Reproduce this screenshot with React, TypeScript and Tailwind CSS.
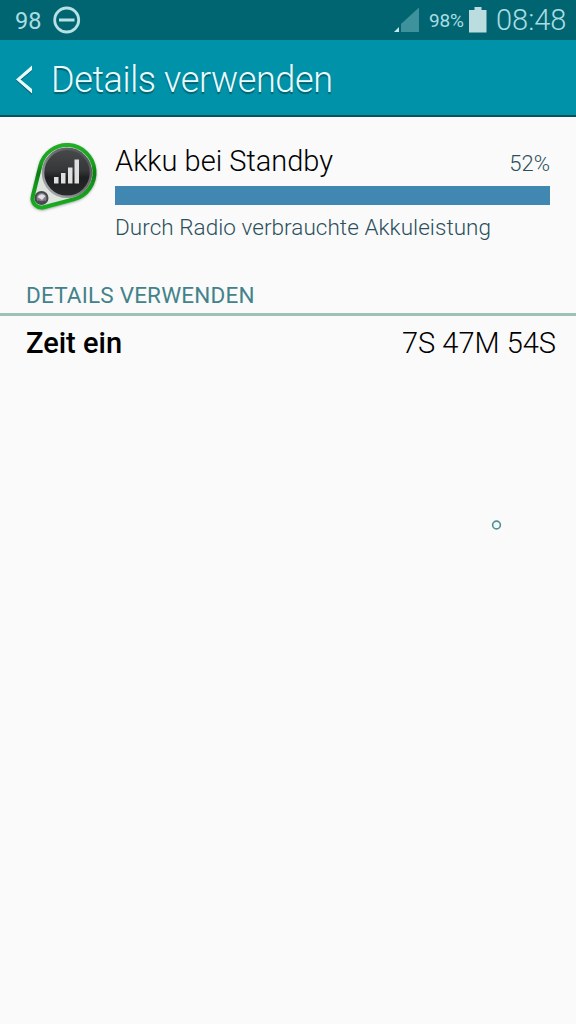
function SignalIcon() {
  return (
    <svg width="27" height="26" viewBox="0 0 27 26" className="shrink-0">
      <path d="M7 25V17L25 0.5V25Z" fill="#3d929b" />
      <path d="M0 25L5 20V25Z" fill="#c4e9ec" />
    </svg>
  );
}

const OUTLINE = "M20.300 30.900A27.500 27.500 0 1 1 54.100 64.100L23.800 72.200A9 9 0 0 1 12.800 61.300Z";

function StandbyIcon() {
  return (
    <svg width="84" height="84" viewBox="0 0 84 84" className="shrink-0">
      <defs>
        <linearGradient id="disc" x1="0" y1="0" x2="0" y2="1">
          <stop offset="0" stopColor="#48494b" />
          <stop offset="0.45" stopColor="#363739" />
          <stop offset="0.6" stopColor="#1e1f21" />
          <stop offset="1" stopColor="#2a2b2d" />
        </linearGradient>
        <linearGradient id="rim" x1="0" y1="1" x2="1" y2="0">
          <stop offset="0" stopColor="#b5b8bb" />
          <stop offset="0.45" stopColor="#77797c" />
          <stop offset="1" stopColor="#484b4d" />
        </linearGradient>
        <linearGradient id="edge" x1="0" y1="0" x2="0" y2="1">
          <stop offset="0" stopColor="#22ae25" />
          <stop offset="0.3" stopColor="#16a01b" />
          <stop offset="0.45" stopColor="#087d10" />
          <stop offset="0.62" stopColor="#12951a" />
          <stop offset="1" stopColor="#18ac20" />
        </linearGradient>
        <filter id="soft" x="-20%" y="-20%" width="140%" height="140%">
          <feGaussianBlur stdDeviation="1.5" />
        </filter>
      </defs>
      <path d={OUTLINE} fill="#4d634d" opacity=".75" stroke="#4d634d" strokeWidth="3" filter="url(#soft)" transform="translate(0 1)" />
      <path d={OUTLINE} fill="#dfe4df" stroke="url(#edge)" strokeWidth="4" />
      <circle cx="47" cy="37.800" r="24" fill="url(#disc)" stroke="url(#rim)" strokeWidth="2.500" />
      <circle cx="21.500" cy="63" r="6" fill="#858188" stroke="#45494a" strokeWidth="2" />
      <path d="M17.500 62Q21 57 25.500 61L22 65Z" fill="#e5dde8" />
      <path d="M18 66Q22 68.500 25 66" fill="none" stroke="#4f4654" strokeWidth="2" />
      <path d="M34 42H38.500V48.500H34Z M41 38H45.500V48.500H41Z M48 32.500H52.500V48.500H48Z M54.500 24.500H59V48.500H54.500Z" fill="#dedede" />
    </svg>
  );
}

export default function App() {
  return (
    <div className="flex h-[1024px] w-[576px] flex-col overflow-hidden bg-[#fafafa] font-['Roboto',sans-serif] whitespace-nowrap">
      <div className="flex h-10 shrink-0 items-center bg-[#016571] pr-[9px] pl-[15px] text-[#a9dde1]">
        <span className="w-[38px] pt-px text-[23.5px] leading-[40px] font-normal">98</span>
        <svg width="28" height="28" viewBox="0 0 28 28" className="shrink-0">
          <circle cx="13.700" cy="14" r="12" fill="none" stroke="#b7e2e5" strokeWidth="2.800" />
          <path d="M6 14H21.500" stroke="#b7e2e5" strokeWidth="3" />
        </svg>
        <div className="ml-auto flex items-center">
          <SignalIcon />
          <span className="ml-[8px] w-[36px] pt-px text-[19px] leading-[40px] tracking-[-0.2px]">98%</span>
          <svg width="18" height="26" viewBox="0 0 18 26" className="ml-[4px] shrink-0">
            <path d="M5.500 0H12.500V3H17.500V25.500H0V3H5.500Z" fill="#bcdde0" />
          </svg>
          <span className="ml-[9px] w-[71px] text-[29px] leading-[40px] font-light">08:48</span>
        </div>
      </div>

      <header className="flex h-[77px] shrink-0 items-center border-b-2 border-[#0b505b] bg-[#0092a8] pt-[5px] pl-[15px] text-[#e9fcff]">
        <svg width="19" height="31" viewBox="0 0 19 31" className="mb-[2px] shrink-0">
          <path d="M17 2V6L5.500 15.500L17 25.500V30L1 15.500Z" transform="translate(0 1)" fill="#075f6d" />
          <path d="M17 1.500V6L5.500 15.500L17 25V29.500L1 15.500Z" fill="#e9fcff" />
        </svg>
        <h1 className="ml-[17px] text-[36px] leading-[44px] font-light tracking-[-0.4px] [text-shadow:0_1.500px_1px_#04606e]">Details verwenden</h1>
      </header>

      <section className="flex h-[153px] shrink-0 pt-[18px] pr-[26px] pl-[20px]">
        <StandbyIcon />
        <div className="ml-[11px] flex flex-1 flex-col pt-[6px]">
          <div className="flex h-[44px] items-start justify-between">
            <span className="pt-[2px] text-[29px] leading-[36px] font-light text-black">Akku bei Standby</span>
            <span className="pt-[9px] text-[22px] leading-[28px] font-light text-[#2b505c]">52%</span>
          </div>
          <div className="mt-px h-[19px] bg-[#4088b1]" />
          <p className="mt-[8px] text-[22.500px] leading-[28px] font-light tracking-[0.05px] text-[#2b505c]">Durch Radio verbrauchte Akkuleistung</p>
        </div>
      </section>

      <h2 className="flex h-[46px] shrink-0 items-center border-b-[3px] border-[#9fc0b6] pt-[6px] pl-[26px] text-[22.500px] leading-[28px] font-normal tracking-[0.18px] text-[#43828b]">DETAILS VERWENDEN</h2>
      <div className="flex h-[54px] shrink-0 items-center justify-between pr-[20px] pl-[26px] text-[29px] leading-[36px] text-black">
        <span className="font-medium">Zeit ein</span>
        <span className="font-light">7S 47M 54S</span>
      </div>
      <svg width="12" height="12" viewBox="0 0 12 12" className="mt-[149px] ml-[490px] shrink-0">
        <circle cx="6.500" cy="6" r="3.900" fill="#eefafa" stroke="#568e91" strokeWidth="1.600" />
      </svg>
    </div>
  );
}
